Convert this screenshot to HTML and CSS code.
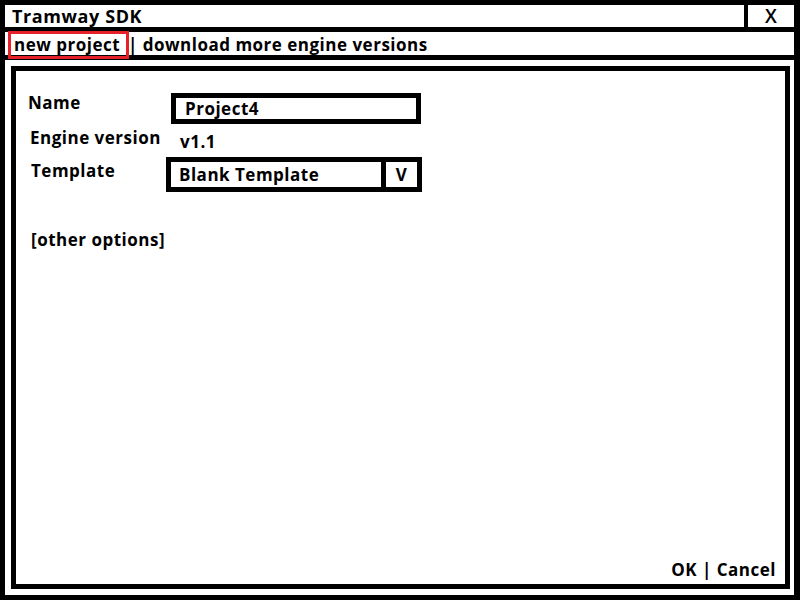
FILE: index.html
```html
<!DOCTYPE html>
<html>
<head>
<meta charset="utf-8">
<link rel="stylesheet" href="styles.css">
</head>
<body>
<div class="window">
  <div class="titlebar">
    <div class="title">Tramway SDK</div>
    <div class="close">X</div>
  </div>
  <div class="toolbar">
    <span class="current">new project</span> | download more engine versions
  </div>
  <div class="content">
    <div class="panel">
      <div class="form">
        <div class="row row-name">
          <div class="label l-name">Name</div>
          <div class="input">Project4</div>
        </div>
        <div class="row row-engine">
          <div class="label l-engine">Engine version</div>
          <div class="value">v1.1</div>
        </div>
        <div class="row row-template">
          <div class="label l-template">Template</div>
          <div class="select">
            <div class="select-text">Blank Template</div>
            <div class="select-btn">V</div>
          </div>
        </div>
        <div class="other">[other options]</div>
      </div>
      <div class="footer">OK | Cancel</div>
    </div>
  </div>
</div>
</body>
</html>
```

FILE: styles.css
```css
html, body {
  margin: 0;
  padding: 0;
  background: #fff;
}
body {
  font-family: "Open Sans", "DejaVu Sans", sans-serif;
  font-weight: 700;
  font-size: 17px;
  letter-spacing: 0.5px;
  color: #000;
}
.window {
  width: 800px;
  height: 600px;
  box-sizing: border-box;
  border: 5px solid #000;
  border-right-width: 6px;
  display: flex;
  flex-direction: column;
}
.titlebar {
  height: 22px;
  border-bottom: 5px solid #000;
  display: flex;
  line-height: 22px;
}
.title {
  flex: 1;
  padding-left: 7px;
  font-size: 18px;
  letter-spacing: 0.6px;
}
.close {
  width: 46px;
  border-left: 4px solid #000;
  text-align: center;
  font-weight: 600;
  font-size: 19px;
  letter-spacing: 0;
}
.toolbar {
  height: 23px;
  border-bottom: 5px solid #000;
  line-height: 25px;
  padding-left: 9px;
  position: relative;
  white-space: nowrap;
}
.current {
  position: relative;
  margin-right: 3px;
}
.current::after {
  content: "";
  position: absolute;
  left: -6px;
  right: -9px;
  top: -2px;
  bottom: -3px;
  border: 3px solid #e8202a;
}
.content {
  flex: 1;
  padding: 6px 4px 6px 6px;
  display: flex;
}
.panel {
  flex: 1;
  border: 5px solid #000;
  display: flex;
  flex-direction: column;
  justify-content: space-between;
  padding: 22px 9px 4px 12px;
}
.form {
  display: flex;
  flex-direction: column;
}
.row {
  display: flex;
  align-items: flex-start;
}
.row-name { height: 31px; }
.row-engine { height: 33px; }
.row-template { height: 35px; }
.label {
  width: 143px;
  line-height: 20px;
}
.l-engine { padding-top: 4px; margin-left: 2px; width: 141px; }
.l-template { padding-top: 4px; margin-left: 3px; width: 135px; }
.input {
  width: 231px;
  height: 21px;
  border: 5px solid #000;
  padding-left: 9px;
  line-height: 22px;
}
.value {
  padding-top: 8px;
  line-height: 20px;
  margin-left: 9px;
}
.select {
  display: flex;
  width: 246px;
  height: 25px;
  border: 5px solid #000;
  line-height: 25px;
}
.select-text {
  flex: 1;
  padding-left: 8px;
}
.select-btn {
  width: 31px;
  border-left: 5px solid #000;
  text-align: center;
}
.other {
  margin-top: 38px;
  margin-left: 3px;
  line-height: 20px;
}
.footer {
  text-align: right;
  line-height: 20px;
}
```
